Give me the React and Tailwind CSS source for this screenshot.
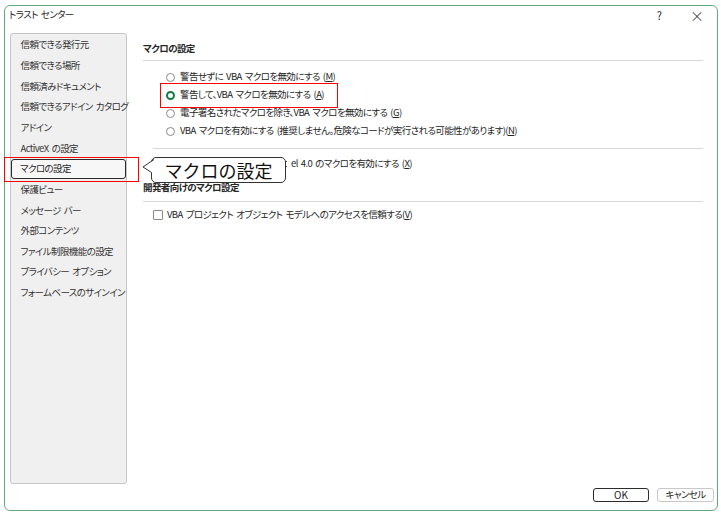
import React from "react";

const items = [
  "信頼できる発行元",
  "信頼できる場所",
  "信頼済みドキュメント",
  "信頼できるアドイン カタログ",
  "アドイン",
  "ActiveX の設定",
  "マクロの設定",
  "保護ビュー",
  "メッセージ バー",
  "外部コンテンツ",
  "ファイル制限機能の設定",
  "プライバシー オプション",
  "フォームベースのサインイン",
];

function Radio({ checked }) {
  return checked ? (
    <span className="w-[9px] h-[9px] rounded-full border-[2.5px] border-[#107c41] bg-white shrink-0" />
  ) : (
    <span className="w-[9px] h-[9px] rounded-full border border-[#8a8a8a] bg-white shrink-0" />
  );
}

function Box() {
  return <span className="w-[10px] h-[10px] border border-[#8a8a8a] rounded-[1px] bg-white shrink-0" />;
}

const radios = [
  { pre: "警告せずに VBA マクロを無効にする (", k: "M", post: ")" },
  { pre: "警告して、VBA マクロを無効にする (", k: "A", post: ")", checked: true },
  { pre: "電子署名されたマクロを除き、VBA マクロを無効にする (", k: "G", post: ")" },
  { pre: "VBA マクロを有効にする (推奨しません。危険なコードが実行される可能性があります)(", k: "N", post: ")" },
];

export default function App() {
  return (
    <div className="relative w-[721px] h-[514px] bg-white pl-[4px] pt-[5px] text-[#262626] font-['Noto_Sans_CJK_JP','Noto_Sans',sans-serif] [font-feature-settings:'palt'] text-[9.5px] tracking-[-0.6px] [word-spacing:1.5px] leading-none">
      <div className="w-[714px] h-[506px] border border-[#62a97c] rounded-[6px] flex flex-col">
        <div className="h-[18px] flex items-center pl-[4px] pr-[13px]">
          <span>トラスト センター</span>
          <span className="ml-auto text-[11px] tracking-normal">?</span>
          <span className="ml-[28px] text-[14px] font-light tracking-normal">×</span>
        </div>
        <div className="flex mt-[9px] h-[451px]">
          <div className="ml-[5px] w-[117px] h-full bg-[#f0f0f0] border border-[#c6c6c6] rounded-[3px] pt-[0.7px]">
            {items.map((t, i) => (
              <div
                key={t}
                className={
                  i === 6
                    ? "h-[20.67px] flex items-center pl-[8px] border-[1.5px] border-[#2b2b2b] rounded-[3px] bg-[#f7f7f7] whitespace-nowrap"
                    : "h-[20.67px] flex items-center pl-[9.5px] text-[#333] whitespace-nowrap"
                }
              >
                {t}
              </div>
            ))}
          </div>
          <div className="ml-[16px] flex-1 pr-[14px] flex flex-col">
            <div className="mt-[8px] h-[16px] flex items-center font-bold">マクロの設定</div>
            <div className="mt-[3px] h-[1px] bg-[#d9d9d9]" />
            <div className="mt-[7px] pl-[23px] flex flex-col">
              {radios.map((r) => (
                <div key={r.k} className="h-[18px] flex items-center gap-[5px] whitespace-nowrap">
                  <Radio checked={r.checked} />
                  <span>
                    {r.pre}
                    <span className="underline">{r.k}</span>
                    {r.post}
                  </span>
                </div>
              ))}
            </div>
            <div className="mt-[8px] ml-[10px] h-[1px] bg-[#d9d9d9]" />
            <div className="mt-[6px] h-[18px] pl-[10px] flex items-center gap-[4px] whitespace-nowrap">
              <Box />
              <span className="inline-block w-[120px] overflow-hidden text-right">VBA マクロが有効な場合に Exc</span>
              <span>
                el 4.0 のマクロを有効にする (<span className="underline">X</span>)
              </span>
            </div>
            <div className="mt-[7px] h-[16px] flex items-center font-bold">開発者向けのマクロ設定</div>
            <div className="mt-[5px] h-[1px] bg-[#d9d9d9]" />
            <div className="mt-[4px] h-[18px] pl-[10px] flex items-center gap-[4px] whitespace-nowrap">
              <Box />
              <span>
                VBA プロジェクト オブジェクト モデルへのアクセスを信頼する(<span className="underline">V</span>)
              </span>
            </div>
          </div>
        </div>
        <div className="mt-[4px] flex justify-end gap-[8px] pr-[3px]">
          <button className="w-[56px] h-[14px] border-[1.5px] border-[#2b2b2b] rounded-[3px] bg-white flex items-center justify-center text-[10px] tracking-normal">
            OK
          </button>
          <button className="w-[57px] h-[14px] border border-[#c8c8c8] rounded-[3px] bg-white flex items-center justify-center">
            キャンセル
          </button>
        </div>
      </div>

      {/* red highlight boxes */}
      <div className="absolute left-[4px] top-[157px] w-[135px] h-[25px] border border-[#ff0000]" />
      <div className="absolute left-[160px] top-[83px] w-[178px] h-[25px] border border-[#ff0000]" />

      {/* callout */}
      <div className="absolute left-[151px] top-[157px] w-[135px] h-[26px] bg-white border border-[#333] rounded-[5px] flex items-center justify-center text-[18px] tracking-normal [word-spacing:normal] text-[#111] [font-feature-settings:normal]">
        マクロの設定
      </div>
      <svg className="absolute left-[141px] top-[157px]" width="14" height="18" viewBox="0 0 14 18">
        <polygon points="12,3 2,10 10.5,15.5 12,15.5" fill="white" />
        <polyline points="13,2.5 2,10 10.5,15.5" fill="none" stroke="#333" strokeWidth="1" />
      </svg>
    </div>
  );
}
